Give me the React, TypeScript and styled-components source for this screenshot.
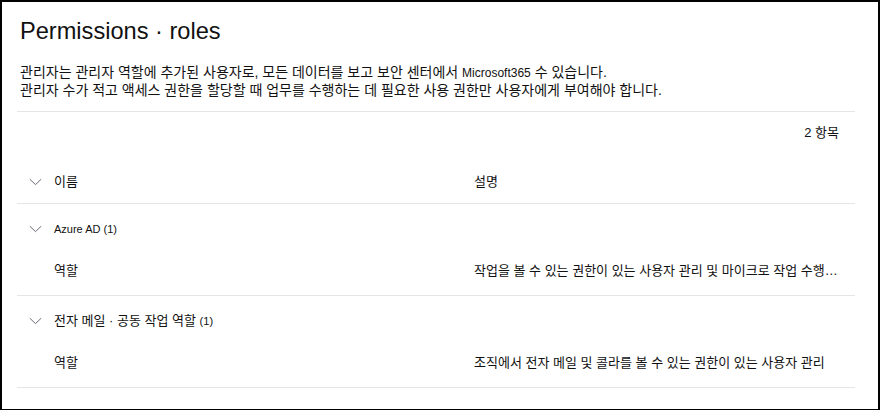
import React from "react";
import styled, { createGlobalStyle } from "styled-components";

const Global = createGlobalStyle`
  html, body { margin: 0; padding: 0; background: #fff; }
  body { font-family: "Liberation Sans", "Noto Sans CJK KR", sans-serif; color: #111; }
`;

const Frame = styled.div`
  width: 880px;
  height: 410px;
  box-sizing: border-box;
  border-style: solid;
  border-color: #000;
  border-width: 2px 2px 1px 2px;
  background: #fff;
  padding: 15px 0 0 15px;
  overflow: hidden;
`;

const Content = styled.div`
  width: 838px;
  display: flex;
  flex-direction: column;
`;

const Title = styled.h1`
  margin: 0;
  padding-left: 3px;
  font-size: 23.6px;
  line-height: 28px;
  font-weight: 400;
  color: #111;
`;

const Description = styled.p`
  margin: 19px 0 0 0;
  padding-left: 3px;
  font-size: 14px;
  line-height: 17px;
  color: #111;
`;

const Latin = styled.span<{ $size: number }>`
  font-size: ${(p) => p.$size}px;
`;

const Divider = styled.div`
  height: 1px;
  background: #e5e5e5;
`;

const TopDivider = styled(Divider)`
  margin-top: 12px;
`;

const Toolbar = styled.div`
  display: flex;
  justify-content: flex-end;
  padding: 11px 16px 0 0;
  font-size: 13px;
  line-height: 20px;
`;

const Row = styled.div<{ $top: number; $bottom: number }>`
  display: grid;
  grid-template-columns: 37px 420px 1fr;
  align-items: center;
  padding: ${(p) => p.$top}px 0 ${(p) => p.$bottom}px 0;
  font-size: 13px;
  line-height: 20px;
`;

const ChevronCell = styled.span`
  display: flex;
  align-items: center;
  padding-left: 12px;
  height: 20px;
`;

const GroupRow = styled.div`
  display: flex;
  align-items: center;
  gap: 12px;
  padding: 15px 0 0 0;
  font-size: 13px;
  line-height: 20px;
`;

const GroupLabel = styled.span`
  color: #111;
`;

const Cell = styled.span`
  white-space: nowrap;
  overflow: hidden;
  text-overflow: ellipsis;
`;

const DescCell = styled(Cell)`
  max-width: 367px;
`;

const Chevron = () => (
  <svg width="13" height="8" viewBox="0 0 13 8" style={{ display: "block" }}>
    <path d="M0.8 1.2 L6.5 6.6 L12.2 1.2" fill="none" stroke="#6c6a78" strokeWidth="1" />
  </svg>
);

const groups = [
  {
    key: "azure",
    name: <Latin $size={11}>Azure AD (1)</Latin>,
    item: "역할",
    desc: "작업을 볼 수 있는 권한이 있는 사용자 관리 및 마이크로 작업 수행하기",
  },
  {
    key: "mail",
    name: (
      <>
        전자 메일 · 공동 작업 역할 <Latin $size={11}>(1)</Latin>
      </>
    ),
    item: "역할",
    desc: "조직에서 전자 메일 및 콜라를 볼 수 있는 권한이 있는 사용자 관리",
  },
];

export default function App() {
  return (
    <>
      <Global />
      <Frame>
        <Content>
          <Title>Permissions · roles</Title>
          <Description>
            관리자는 관리자 역할에 추가된 사용자로, 모든 데이터를 보고 보안 센터에서{" "}
            <Latin $size={12}>Microsoft365</Latin> 수 있습니다.
            <br />
            관리자 수가 적고 액세스 권한을 할당할 때 업무를 수행하는 데 필요한 사용 권한만 사용자에게 부여해야 합니다.
          </Description>
          <TopDivider />
          <Toolbar>2 항목</Toolbar>
          <Row $top={29} $bottom={11}>
            <ChevronCell>
              <Chevron />
            </ChevronCell>
            <Cell>이름</Cell>
            <Cell>설명</Cell>
          </Row>
          <Divider />
          {groups.map((g) => (
            <React.Fragment key={g.key}>
              <GroupRow>
                <ChevronCell>
                  <Chevron />
                </ChevronCell>
                <GroupLabel>{g.name}</GroupLabel>
              </GroupRow>
              <Row $top={22} $bottom={14}>
                <span />
                <Cell>{g.item}</Cell>
                <DescCell>{g.desc}</DescCell>
              </Row>
              <Divider />
            </React.Fragment>
          ))}
        </Content>
      </Frame>
    </>
  );
}
